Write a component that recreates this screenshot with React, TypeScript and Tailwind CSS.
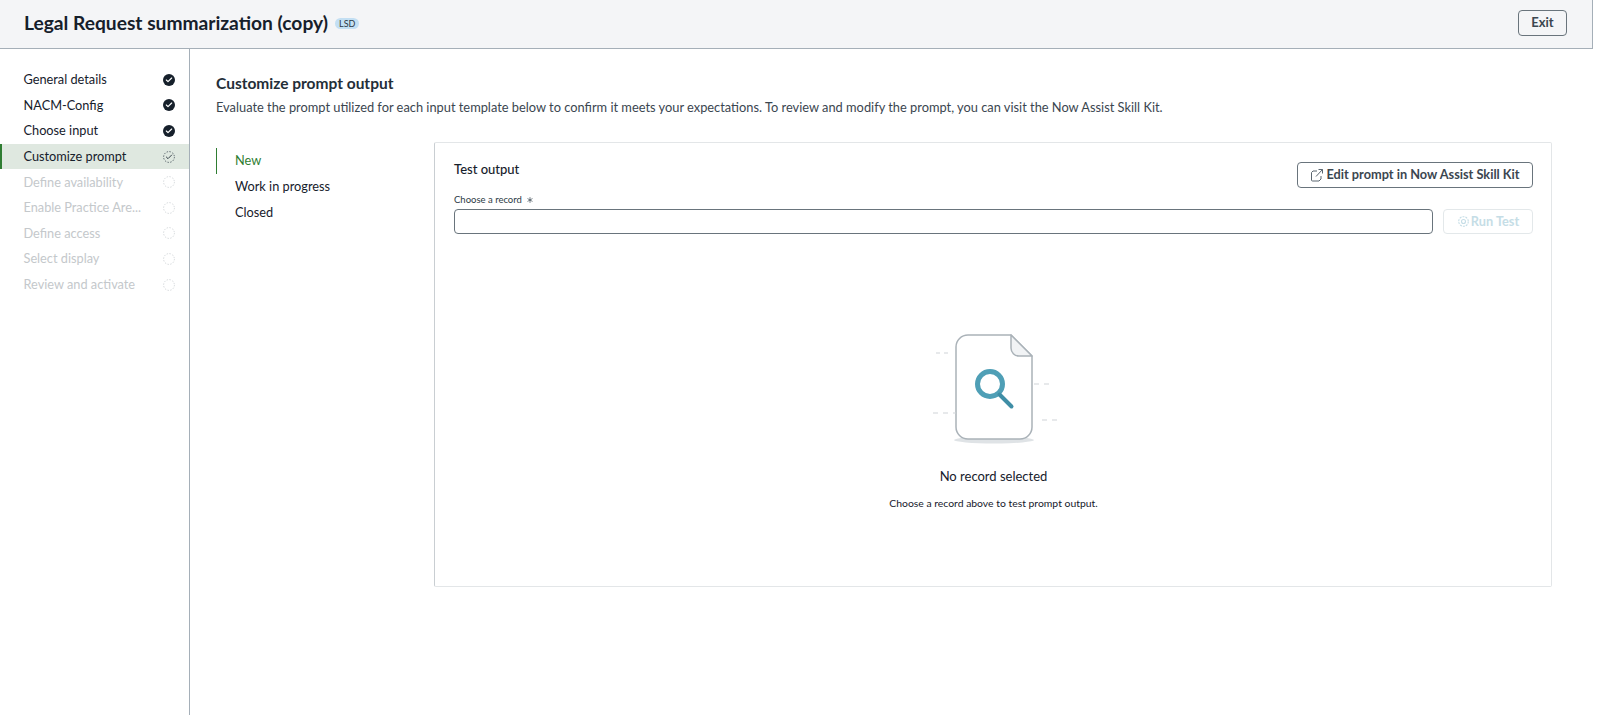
import { Asterisk, Check } from "lucide-react"

const STEPS = [
  { label: "General details", state: "done" },
  { label: "NACM-Config", state: "done" },
  { label: "Choose input", state: "done" },
  { label: "Customize prompt", state: "active" },
  { label: "Define availability", state: "todo" },
  { label: "Enable Practice Are...", state: "todo" },
  { label: "Define access", state: "todo" },
  { label: "Select display", state: "todo" },
  { label: "Review and activate", state: "todo" },
]

function DottedRing({ color }: { color: string }) {
  return (
    <svg width="12" height="12" viewBox="0 0 12 12" fill="none" className="absolute inset-0">
      <circle cx="6" cy="6" r="5.400" stroke={color} strokeWidth="0.8" strokeDasharray="1.400 1.400" />
    </svg>
  )
}

function StepIcon({ state }: { state: string }) {
  if (state === "done") {
    return (
      <span className="flex h-3 w-3 items-center justify-center rounded-full bg-[#16202b]">
        <Check className="h-2 w-2 text-white" strokeWidth={3.5} />
      </span>
    )
  }
  return (
    <span className="relative flex h-3 w-3 items-center justify-center">
      <DottedRing color={state === "active" ? "#3b4650" : "#c9ced2"} />
      {state === "active" && <Check className="h-2 w-2 text-[#16202b]" strokeWidth={2.5} />}
    </span>
  )
}

function EmptyIllustration() {
  return (
    <svg width="132" height="116" viewBox="0 0 132 116" fill="none">
      <ellipse cx="66" cy="106" rx="40" ry="3.500" fill="#dfe3e6" />
      <path
        d="M40 1h43l21 21v71a12 12 0 0 1-12 12H40a12 12 0 0 1-12-12V13A12 12 0 0 1 40 1z"
        fill="#fff"
        stroke="#aab2b8"
        strokeWidth="1.500"
      />
      <path d="M83 1l21 21H91a8 8 0 0 1-8-8z" fill="#f1f3f5" stroke="#aab2b8" strokeWidth="1.500" strokeLinejoin="round" />
      <circle cx="62" cy="50" r="12.500" stroke="#4f9fb6" strokeWidth="5" />
      <path d="M71.500 60.500l12 12" stroke="#3f8ea6" strokeWidth="4" strokeLinecap="round" />
      <path d="M8 19h14" stroke="#cfd4d7" strokeWidth="1.200" strokeDasharray="4 4" />
      <path d="M5 79h23" stroke="#cfd4d7" strokeWidth="1.200" strokeDasharray="5 5" />
      <path d="M106 50h18" stroke="#cfd4d7" strokeWidth="1.200" strokeDasharray="5 5" />
      <path d="M114 86h18" stroke="#cfd4d7" strokeWidth="1.200" strokeDasharray="5 5" />
    </svg>
  )
}

export default function App() {
  return (
    <div className="flex h-[715px] w-[1597px] flex-col overflow-hidden bg-white font-['Lato',sans-serif] text-[#16202b]">
      <header className="mr-[4px] flex h-[49px] shrink-0 items-center justify-between border-r border-b border-[#a5afb8] bg-[#f4f5f7] pr-[25px] pb-[2px] pl-[24px]">
        <div className="flex items-center gap-[7px]">
          <h1 className="text-[19.2px] leading-6 font-bold">Legal Request summarization (copy)</h1>
          <span className="rounded-full bg-[#c3dff3] px-[4px] text-[9px] leading-[11px] text-[#2c3a45]">LSD</span>
        </div>
        <button className="h-[26px] w-[49px] rounded-[4px] border border-[#69747c] text-[13px] font-bold text-[#3b4650]">Exit</button>
      </header>

      <div className="flex min-h-0 flex-1">
        <nav className="w-[190px] shrink-0 border-r border-[#a5afb8] pt-[18px]">
          {STEPS.map((s) => (
            <div
              key={s.label}
              className={`flex h-[25.6px] items-center justify-between border-l-2 pr-[14px] pl-[21.5px] text-[12.75px] ${
                s.state === "active" ? "border-[#2f7d32] bg-[#dfe8e0]" : "border-transparent"
              } ${s.state === "todo" ? "text-[#c4c8cb]" : ""}`}
            >
              <span>{s.label}</span>
              <StepIcon state={s.state} />
            </div>
          ))}
        </nav>

        <main className="min-w-0 flex-1 pt-[24px] pr-[45px] pl-[26px]">
          <h2 className="text-[15.5px] leading-5 font-bold text-[#232e38]">Customize prompt output</h2>
          <p className="mt-[4px] text-[12.83px] leading-5 text-[#3b4650]">
            Evaluate the prompt utilized for each input template below to confirm it meets your expectations. To review and modify the prompt, you can visit the Now Assist Skill Kit.
          </p>

          <div className="mt-[25px] flex">
            <div className="w-[218px] shrink-0 pt-[6px]">
              {["New", "Work in progress", "Closed"].map((t, i) => (
                <div
                  key={t}
                  className={`flex h-[26px] items-center border-l pl-[18px] text-[12.75px] ${
                    i === 0 ? "border-[#2f7d32] text-[#2f7d32]" : "border-transparent"
                  }`}
                >
                  {t}
                </div>
              ))}
            </div>

            <section className="flex h-[445px] flex-1 flex-col rounded-[2px] border border-[#e3e6e8] border-l-[#c9ced2] pt-[19px] pr-[18px] pl-[19px]">
              <div className="flex items-start justify-between">
                <h3 className="-mt-[3px] text-[13px] leading-5 font-medium">Test output</h3>
                <button className="flex h-[26px] w-[236px] items-center justify-center gap-[2px] rounded-[4px] border border-[#69747c] text-[12.75px] font-bold text-[#3b4650]">
                  <svg width="14" height="14" viewBox="0 0 14 14" fill="none" stroke="#5b6670" strokeWidth="1">
                    <path d="M7 3H3L1.500 4.500V12a1 1 0 0 0 1 1h6.500L11 11V8" />
                    <path d="M6 8.500L12.500 1.500M8.500 1.500h4v4" />
                  </svg>
                  Edit prompt in Now Assist Skill Kit
                </button>
              </div>

              <label className="mt-[3px] flex h-[18px] items-center gap-[3px] text-[9.5px] text-[#2c3a45]">
                Choose a record <Asterisk className="h-[10px] w-[10px]" strokeWidth={1.5} />
              </label>
              <div className="flex gap-[10px]">
                <input className="h-[25px] flex-1 rounded-[4px] border border-[#69747c] bg-white" />
                <button className="flex h-[25px] w-[90px] items-center justify-center gap-[1px] rounded-[4px] border border-[#e3e8ea] text-[12.75px] font-bold text-[#c5dde6]">
                  <svg width="13" height="13" viewBox="0 0 13 13" fill="none" stroke="#c5dde6" strokeWidth="1.100">
                    <circle cx="6.500" cy="6.500" r="2" />
                    <circle cx="6.500" cy="6.500" r="4.800" strokeDasharray="2 1" />
                  </svg>
                  Run Test
                </button>
              </div>

              <div className="mt-[100px] flex flex-col items-center">
                <EmptyIllustration />
                <p className="mt-[18px] text-[13px] leading-4">No record selected</p>
                <p className="mt-[11px] text-[10.4px] leading-4">Choose a record above to test prompt output.</p>
              </div>
            </section>
          </div>
        </main>
      </div>
    </div>
  )
}
